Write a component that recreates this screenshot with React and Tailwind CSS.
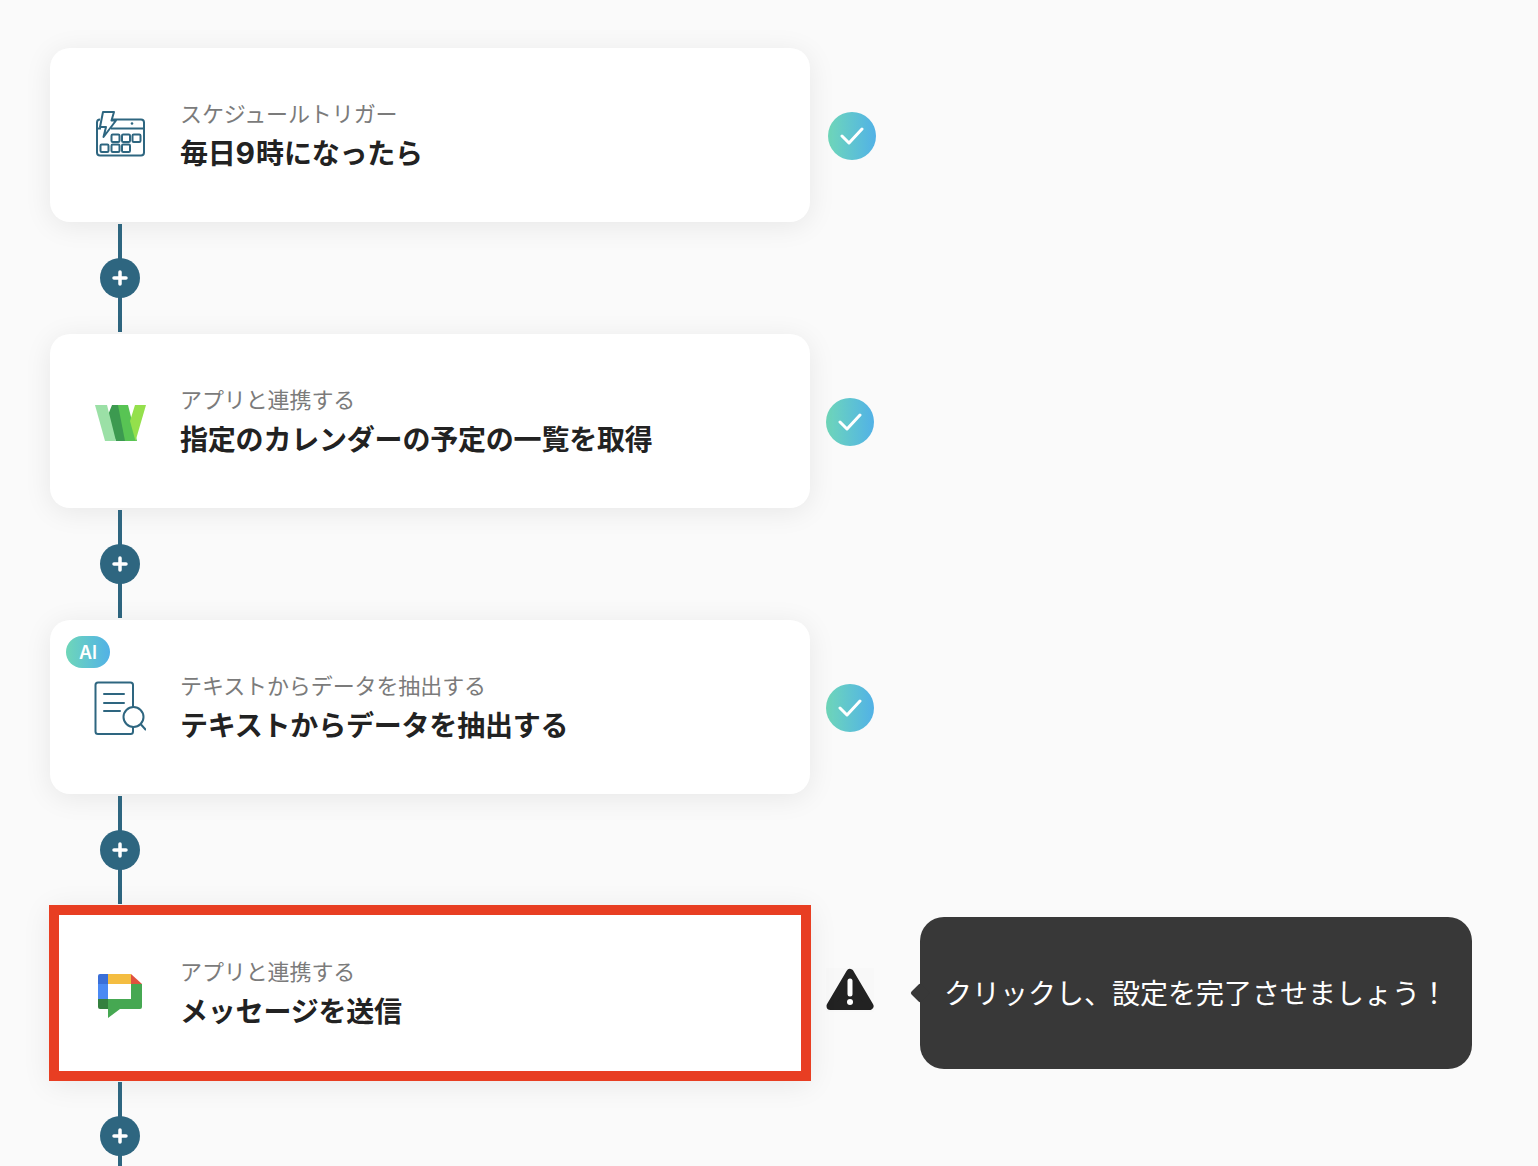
import React from "react";

const FONT = "font-['Inter','Noto_Sans_CJK_JP',sans-serif]";

function CalendarIcon() {
  return (
    <svg width="52" height="48" viewBox="0 0 52 48" fill="none" stroke="#2e6680" strokeWidth="2">
      <path d="M5 8.500Q2 8.500 2 11.500V41.500Q2 44.500 5 44.500H46Q49 44.500 49 41.500V11.500Q49 8.500 46 8.500H17" />
      <path d="M2 17.500H6M16 17.500H49" />
      <path d="M8 1H19L16.500 9.500H21L8.500 26L11 16H5Z" fill="#fff" strokeLinejoin="round" />
      <circle cx="37" cy="12.500" r="1.300" fill="#2e6680" stroke="none" />
      <rect x="16.500" y="23.500" width="8" height="7.500" rx="1.200" />
      <rect x="27" y="23.500" width="8" height="7.500" rx="1.200" />
      <rect x="37.500" y="23.500" width="8" height="7.500" rx="1.200" />
      <rect x="5.500" y="33.500" width="8" height="7.500" rx="1.200" />
      <rect x="16.500" y="33.500" width="8" height="7.500" rx="1.200" />
      <rect x="27" y="33.500" width="8" height="7.500" rx="1.200" />
    </svg>
  );
}

function WIcon() {
  return (
    <svg width="52" height="38" viewBox="0 0 52 38">
      <path d="M18 1H28L32 37H22L12 16Z" fill="#3c9a50" />
      <path d="M1 1H13L22 37H11Z" fill="#9be0a6" />
      <path d="M24 1H34L43 37H31Z" fill="#58c454" />
      <path d="M41 1H52L41.500 37L36 17Z" fill="#94e04c" />
    </svg>
  );
}

function DocIcon() {
  return (
    <svg width="52" height="54" viewBox="0 0 52 54" fill="none" stroke="#2e6680" strokeWidth="2" strokeLinecap="round">
      <path d="M39 26V4Q39 1.500 36.500 1.500H4Q1.500 1.500 1.500 4V50.500Q1.500 53 4 53H36.500Q39 53 39 50.500V46" />
      <path d="M10 13H30M10 22H30M10 30H26" />
      <circle cx="39.500" cy="36" r="10" fill="#fff" />
      <path d="M47 43.500L51.500 48.500" />
    </svg>
  );
}

function ChatIcon() {
  return (
    <svg width="44" height="44" viewBox="0 0 44 44">
      <path d="M33 0H9V10H33Z" fill="#f4bd41" />
      <path d="M33 0V10H44Z" fill="#e0513e" />
      <path d="M2 0H10V10H0V2Q0 0 2 0Z" fill="#3a6fd8" />
      <rect x="0" y="10" width="10" height="15" fill="#4a8af4" />
      <path d="M0 25H10V35H2Q0 35 0 33Z" fill="#34803f" />
      <path d="M33 10H44V33Q44 35 42 35H22L10 44V25H33Z" fill="#46a852" />
      <rect x="10" y="10" width="23" height="15" fill="#fff" />
    </svg>
  );
}

function Check({ offset }) {
  return (
    <div className={`${offset} mt-[2px] w-12 h-12 rounded-full flex items-center justify-center bg-gradient-to-r from-[#6fd6b8] to-[#52b1e6]`}>
      <svg width="24" height="18" viewBox="0 0 24 18" fill="none" stroke="#fff" strokeWidth="3" strokeLinecap="round" strokeLinejoin="round">
        <path d="M2 9L9 16L22 2" />
      </svg>
    </div>
  );
}

function Connector() {
  return (
    <div className="w-[760px] h-[112px] flex justify-start pl-[50px]">
      <div className="relative w-10 h-[108px] mt-0.5 flex justify-center">
        <div className="w-1 h-full bg-[#2e6680]" />
        <div className="absolute top-[34px] left-0 w-10 h-10 rounded-full bg-[#2e6680] flex items-center justify-center">
          <svg width="16" height="16" viewBox="0 0 16 16" stroke="#fff" strokeWidth="3.500" strokeLinecap="round">
            <path d="M8 2V14M2 8H14" />
          </svg>
        </div>
      </div>
    </div>
  );
}

function Card({ icon, iconClass, sub, title, badge, red }) {
  return (
    <div
      className={`relative w-[760px] h-[174px] bg-white flex items-center shadow-[0_4px_28px_rgba(0,0,0,0.08)] ${
        red ? "outline-[10px] outline-[#e83e22] -outline-offset-[9px]" : "rounded-[20px]"
      }`}
    >
      {badge && (
        <div className="absolute left-4 top-[16px] w-11 h-8 rounded-full bg-gradient-to-r from-[#6fd6b8] to-[#52b1e6] text-white text-[18px] font-semibold flex items-center justify-center">
          AI
        </div>
      )}
      <div className="w-[130px] pl-[44px] shrink-0 flex items-center">
        <div className={iconClass}>{icon}</div>
      </div>
      <div className="flex flex-col gap-[4px] mt-[1px]">
        <div className="text-[22px] leading-[32px] text-[#7b7b7b] tracking-[-0.1px]">{sub}</div>
        <div className="text-[28px] leading-[40px] font-bold text-[#222] tracking-[-0.2px]">{title}</div>
      </div>
    </div>
  );
}

export default function App() {
  return (
    <div className={`${FONT} min-h-[1166px] h-[1166px] overflow-hidden bg-[#fafafa] pl-[50px] pt-[48px]`}>
      <div className="flex items-center">
        <Card
          icon={<CalendarIcon />}
          iconClass="ml-px"
          sub="スケジュールトリガー"
          title={
            <>
              毎日<span className="text-[30px] leading-none tracking-[1px]">9</span>時になったら
            </>
          }
        />
        <Check offset="ml-[18px]" />
      </div>
      <Connector />
      <div className="flex items-center">
        <Card icon={<WIcon />} iconClass="mt-1" sub="アプリと連携する" title="指定のカレンダーの予定の一覧を取得" />
        <Check offset="ml-4" />
      </div>
      <Connector />
      <div className="flex items-center">
        <Card icon={<DocIcon />} iconClass="mt-[2px]" sub="テキストからデータを抽出する" title="テキストからデータを抽出する" badge />
        <Check offset="ml-4" />
      </div>
      <Connector />
      <div className="flex items-center">
        <Card icon={<ChatIcon />} iconClass="mt-[6px] ml-1" sub="アプリと連携する" title="メッセージを送信" red />
        <svg className="ml-4 -mt-[6px] bg-[#f8f8f8]" width="48" height="44" viewBox="0 0 48 44">
          <path d="M24 5L43.500 38H4.500Z" fill="#222" stroke="#222" strokeWidth="8" strokeLinejoin="round" />
          <path d="M24 13V26" stroke="#fff" strokeWidth="5" strokeLinecap="round" />
          <circle cx="24" cy="34" r="3" fill="#fff" />
        </svg>
        <div className="relative ml-[46px] w-[552px] h-[152px] rounded-[24px] bg-[#383838] flex items-center pl-6 text-[28px] text-white">
          <div className="absolute -left-[7px] top-[69px] w-3.5 h-3.5 bg-[#383838] rotate-45 rounded-[2px]" />
          <span className="relative mt-[2px]">クリックし、設定を完了させましょう！</span>
        </div>
      </div>
      <Connector />
    </div>
  );
}
